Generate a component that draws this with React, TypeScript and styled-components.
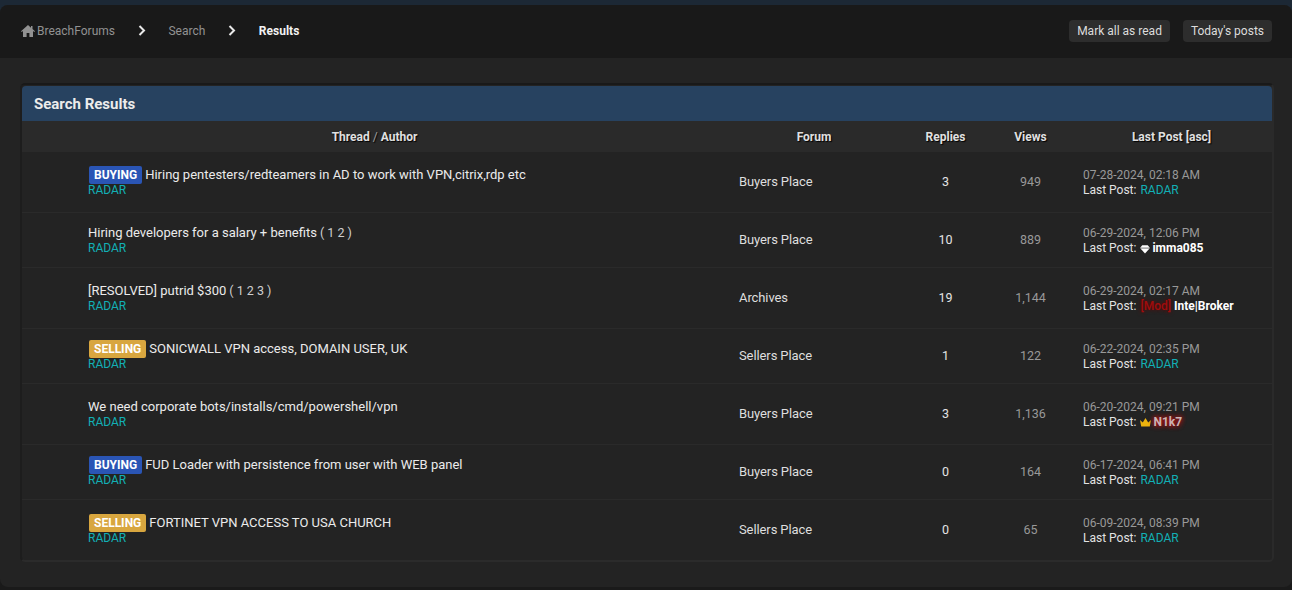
import { ReactNode } from "react";
import styled, { createGlobalStyle } from "styled-components";

const GlobalStyle = createGlobalStyle`
  html, body {
    margin: 0;
    background: #1a1a1a;
    font-family: Roboto, "Liberation Sans", sans-serif;
    font-size: 13px;
    color: #f0f0f0;
  }
  * { box-sizing: border-box; }
`;

const COLUMNS = "705px 174px 89px 81px 1fr";

const Page = styled.div`
  width: 1292px;
  height: 590px;
  padding-top: 5px;
  overflow: hidden;
  background: linear-gradient(#1c2835 12px, #1a1a1a 12px);
`;

const Shell = styled.div`
  height: 582px;
  border-radius: 8px;
  background: #232323;
  overflow: hidden;
`;

const TopBar = styled.div`
  height: 53px;
  background: #191919;
  display: flex;
  align-items: center;
  justify-content: space-between;
  padding: 0 20px 2px 21px;
`;

const Crumbs = styled.nav`
  display: flex;
  align-items: center;
  font-size: 12px;
`;

const Crumb = styled.a<{ $current?: boolean }>`
  display: flex;
  align-items: center;
  gap: 2px;
  color: ${({ $current }) => ($current ? "#f2f2f2" : "#929292")};
  font-weight: ${({ $current }) => ($current ? 700 : 400)};
`;

const Chevron = styled.svg`
  width: 8px;
  height: 11px;
  margin: 0 22.5px 0 23px;
`;

const Actions = styled.div`
  display: flex;
  gap: 13px;
`;

const ActionButton = styled.a`
  height: 22px;
  padding: 0 8px;
  display: flex;
  align-items: center;
  border-radius: 4px;
  background: #2d2d2d;
  color: #dcdcdc;
  font-size: 12px;
`;

const Content = styled.main`
  padding: 25px 18px 0 20px;
`;

const Panel = styled.section`
  border: 2px solid #1d1d1d;
  border-top-color: #191919;
  border-right-color: #2a2a2a;
  border-bottom-color: #2b2b2b;
  border-radius: 5px;
  background: #232323;
  padding: 1px 0 0;
`;

const PanelTitle = styled.h2`
  margin: 0;
  height: 35px;
  padding: 1px 12px 0;
  display: flex;
  align-items: center;
  background: #274260;
  border-radius: 4px 4px 0 0;
  color: #ececec;
  font-size: 15px;
  font-weight: 700;
`;

const HeadRow = styled.div`
  height: 31px;
  display: grid;
  grid-template-columns: ${COLUMNS};
  align-items: center;
  background: #2a2a2a;
`;

const HeadCell = styled.div`
  text-align: center;
  font-size: 12px;
  font-weight: 700;
  color: #e0e0e0;
  text-shadow: 1px 1px 1px #000;
`;

const Slash = styled.span`
  font-weight: 400;
  color: #a0a0a0;
`;

const Row = styled.div<{ $height: number }>`
  height: ${({ $height }) => $height}px;
  display: grid;
  grid-template-columns: ${COLUMNS};
  align-items: center;
  border-bottom: 1px solid #2a2a2a;

  &:last-child {
    border-bottom: none;
  }
`;

const ThreadCell = styled.div`
  padding-left: 66px;
`;

const TitleLine = styled.div`
  display: flex;
  align-items: center;
  height: 13px;
  font-size: 13px;
  color: #ebebeb;
  white-space: nowrap;
`;

const Prefix = styled.span<{ $kind: "buying" | "selling" }>`
  height: 18px;
  padding: 0 5px;
  margin: 0 3px 0 1px;
  display: flex;
  align-items: center;
  border-radius: 2px;
  background: ${({ $kind }) => ($kind === "buying" ? "#2a55b5" : "#d8a63f")};
  color: #fff;
  font-size: 12px;
  font-weight: 700;
`;

const Pages = styled.span`
  margin-left: 3px;
  color: #cfcfcf;
  white-space: pre;
  font-size: 12.5px;
`;

const Radar = styled.span`
  color: #12b0b5;
  font-size: 12px;
`;

const ThreadAuthor = styled(Radar)`
  display: block;
  margin-top: 3px;
  line-height: 12px;
`;

const ForumCell = styled.div`
  padding: 0 0 1px 12px;
  color: #dedede;
  font-size: 13px;
  letter-spacing: -0.1px;
`;

const RepliesCell = styled.div`
  text-align: center;
  padding-bottom: 1px;
  color: #e4e4e4;
  font-size: 12.5px;
`;

const ViewsCell = styled.div`
  text-align: center;
  padding-bottom: 1px;
  color: #999999;
  font-size: 12.5px;
`;

const LastCell = styled.div`
  padding: 2px 0 0 12px;
  font-size: 12px;
  line-height: 15px;
`;

const LastDate = styled.div`
  color: #999999;
`;

const LastAuthor = styled.div`
  display: flex;
  align-items: center;
  gap: 1px;
  color: #e2e2e2;
  white-space: pre;
`;

const StrongUser = styled.span`
  color: #fff;
  font-weight: 700;
`;

const ModTag = styled.span`
  margin-right: 2px;
  color: #a00c0c;
  font-weight: 500;
  text-shadow: 0 0 4px #6d0000;
`;

const RedUser = styled.span`
  color: #c9b4b4;
  font-weight: 700;
  text-shadow: 0 0 5px #c01010, 0 0 5px #c01010;
`;

const UserIcon = styled.svg`
  width: 11px;
  height: 10px;
  margin-right: 1px;
`;

const DiamondIcon = styled(UserIcon)`
  width: 10px;
`;

const HomeIcon = () => (
  <svg width="14" height="12" viewBox="0 0 14 12" aria-hidden="true">
    <path fill="#929292" d="M7 0 0 6.2l.8.9L2 6v6h3.6V8h2.8v4H12V6l1.2 1.1.8-.9L11.5 4V1H10v1.7z" />
  </svg>
);

const Separator = () => (
  <Chevron viewBox="0 0 8 11" aria-hidden="true">
    <path d="M1.5 1 6 5.5 1.5 10" fill="none" stroke="#e8e8e8" strokeWidth="2" />
  </Chevron>
);

const Diamond = () => (
  <DiamondIcon viewBox="0 0 11 10" aria-hidden="true">
    <path fill="#fff" d="M2.5 1h6L11 4 5.5 10 0 4z" />
    <path stroke="#222" strokeWidth=".7" d="M0 4h11" />
  </DiamondIcon>
);

const Crown = () => (
  <UserIcon viewBox="0 0 11 10" aria-hidden="true">
    <path fill="#eeb40e" d="M0 2l2.8 2.4L5.5 0l2.7 4.4L11 2l-1.2 6.5H1.2z" />
  </UserIcon>
);

type Thread = {
  prefix?: "buying" | "selling";
  title: string;
  pages?: string;
  forum: string;
  replies: string;
  views: string;
  date: string;
  last: ReactNode;
  height: number;
};

const radar = <Radar>RADAR</Radar>;

const THREADS: Thread[] = [
  {
    prefix: "buying",
    title: "Hiring pentesters/redteamers in AD to work with VPN,citrix,rdp etc",
    forum: "Buyers Place",
    replies: "3",
    views: "949",
    date: "07-28-2024, 02:18 AM",
    last: radar,
    height: 61,
  },
  {
    title: "Hiring developers for a salary + benefits",
    pages: "( 1 2 )",
    forum: "Buyers Place",
    replies: "10",
    views: "889",
    date: "06-29-2024, 12:06 PM",
    last: (
      <>
        <Diamond />
        <StrongUser>imma085</StrongUser>
      </>
    ),
    height: 55,
  },
  {
    title: "[RESOLVED] putrid $300",
    pages: "( 1 2 3 )",
    forum: "Archives",
    replies: "19",
    views: "1,144",
    date: "06-29-2024, 02:17 AM",
    last: (
      <>
        <ModTag>[Mod]</ModTag>
        <StrongUser>Inte|Broker</StrongUser>
      </>
    ),
    height: 61,
  },
  {
    prefix: "selling",
    title: "SONICWALL VPN access, DOMAIN USER, UK",
    forum: "Sellers Place",
    replies: "1",
    views: "122",
    date: "06-22-2024, 02:35 PM",
    last: radar,
    height: 55,
  },
  {
    title: "We need corporate bots/installs/cmd/powershell/vpn",
    forum: "Buyers Place",
    replies: "3",
    views: "1,136",
    date: "06-20-2024, 09:21 PM",
    last: (
      <>
        <Crown />
        <RedUser>N1k7</RedUser>
      </>
    ),
    height: 61,
  },
  {
    prefix: "buying",
    title: "FUD Loader with persistence from user with WEB panel",
    forum: "Buyers Place",
    replies: "0",
    views: "164",
    date: "06-17-2024, 06:41 PM",
    last: radar,
    height: 55,
  },
  {
    prefix: "selling",
    title: "FORTINET VPN ACCESS TO USA CHURCH",
    forum: "Sellers Place",
    replies: "0",
    views: "65",
    date: "06-09-2024, 08:39 PM",
    last: radar,
    height: 60,
  },
];

const App = () => (
  <Page>
    <GlobalStyle />
    <Shell>
      <TopBar>
        <Crumbs>
          <Crumb>
            <HomeIcon />
            BreachForums
          </Crumb>
          <Separator />
          <Crumb>Search</Crumb>
          <Separator />
          <Crumb $current>Results</Crumb>
        </Crumbs>
        <Actions>
          <ActionButton>Mark all as read</ActionButton>
          <ActionButton>Today's posts</ActionButton>
        </Actions>
      </TopBar>
      <Content>
        <Panel>
          <PanelTitle>Search Results</PanelTitle>
          <HeadRow>
            <HeadCell>
              Thread <Slash>/</Slash> Author
            </HeadCell>
            <HeadCell>Forum</HeadCell>
            <HeadCell>Replies</HeadCell>
            <HeadCell>Views</HeadCell>
            <HeadCell>Last Post [asc]</HeadCell>
          </HeadRow>
          {THREADS.map((thread) => (
            <Row key={thread.date} $height={thread.height}>
              <ThreadCell>
                <TitleLine>
                  {thread.prefix && (
                    <Prefix $kind={thread.prefix}>
                      {thread.prefix.toUpperCase()}
                    </Prefix>
                  )}
                  {thread.title}
                  {thread.pages && <Pages>{thread.pages}</Pages>}
                </TitleLine>
                <ThreadAuthor>RADAR</ThreadAuthor>
              </ThreadCell>
              <ForumCell>{thread.forum}</ForumCell>
              <RepliesCell>{thread.replies}</RepliesCell>
              <ViewsCell>{thread.views}</ViewsCell>
              <LastCell>
                <LastDate>{thread.date}</LastDate>
                <LastAuthor>Last Post: {thread.last}</LastAuthor>
              </LastCell>
            </Row>
          ))}
        </Panel>
      </Content>
    </Shell>
  </Page>
);

export default App;
